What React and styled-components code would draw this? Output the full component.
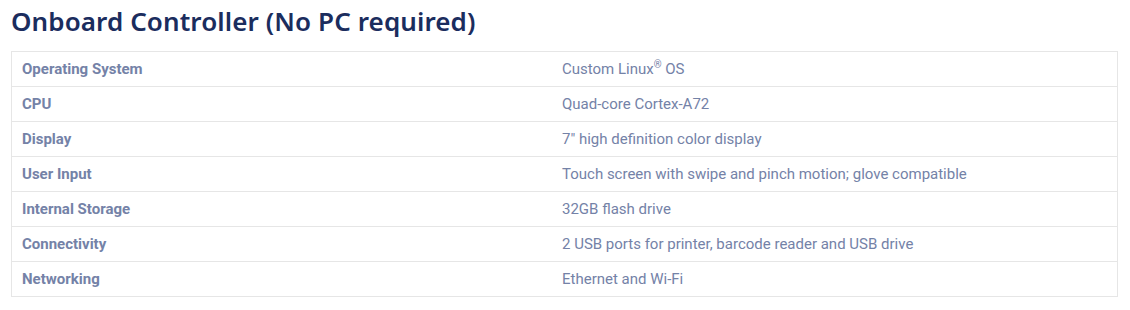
import React from "react";
import styled, { createGlobalStyle } from "styled-components";

const Global = createGlobalStyle`
  html, body { margin: 0; padding: 0; background: #fff; }
  body { font-family: Roboto, "Liberation Sans", sans-serif; }
`;

const Page = styled.div`
  padding: 4px 11px 0 11px;
  width: 1107px;
`;

const Heading = styled.h2`
  margin: 0 0 12px 0;
  font-family: "Noto Sans", "Open Sans", sans-serif;
  font-weight: 600;
  font-size: 26px;
  line-height: 35px;
  color: #1b2d5e;
  letter-spacing: 0.1px;
`;

const Table = styled.table`
  width: 100%;
  border-collapse: collapse;
  border: 1px solid #e6e6e6;
  font-size: 15px;
  color: #7482a7;
`;

const Row = styled.tr`
  height: 35px;
  border-bottom: 1px solid #e6e6e6;
`;

const Cell = styled.td`
  width: ${(p) => (p.$label ? "520px" : "auto")};
  padding: 0 10px;
  vertical-align: middle;
  font-weight: ${(p) => (p.$label ? 700 : 400)};
`;

const Sup = styled.sup`
  font-size: 10px;
  line-height: 0;
`;

const rows = [
  ["Operating System", <>Custom Linux<Sup>®</Sup> OS</>],
  ["CPU", "Quad-core Cortex-A72"],
  ["Display", "7\" high definition color display"],
  ["User Input", "Touch screen with swipe and pinch motion; glove compatible"],
  ["Internal Storage", "32GB flash drive"],
  ["Connectivity", "2 USB ports for printer, barcode reader and USB drive"],
  ["Networking", "Ethernet and Wi-Fi"],
];

export default function App() {
  return (
    <Page>
      <Global />
      <Heading>Onboard Controller (No PC required)</Heading>
      <Table>
        <tbody>
          {rows.map(([k, v]) => (
            <Row key={k}>
              <Cell $label>{k}</Cell>
              <Cell>{v}</Cell>
            </Row>
          ))}
        </tbody>
      </Table>
    </Page>
  );
}
